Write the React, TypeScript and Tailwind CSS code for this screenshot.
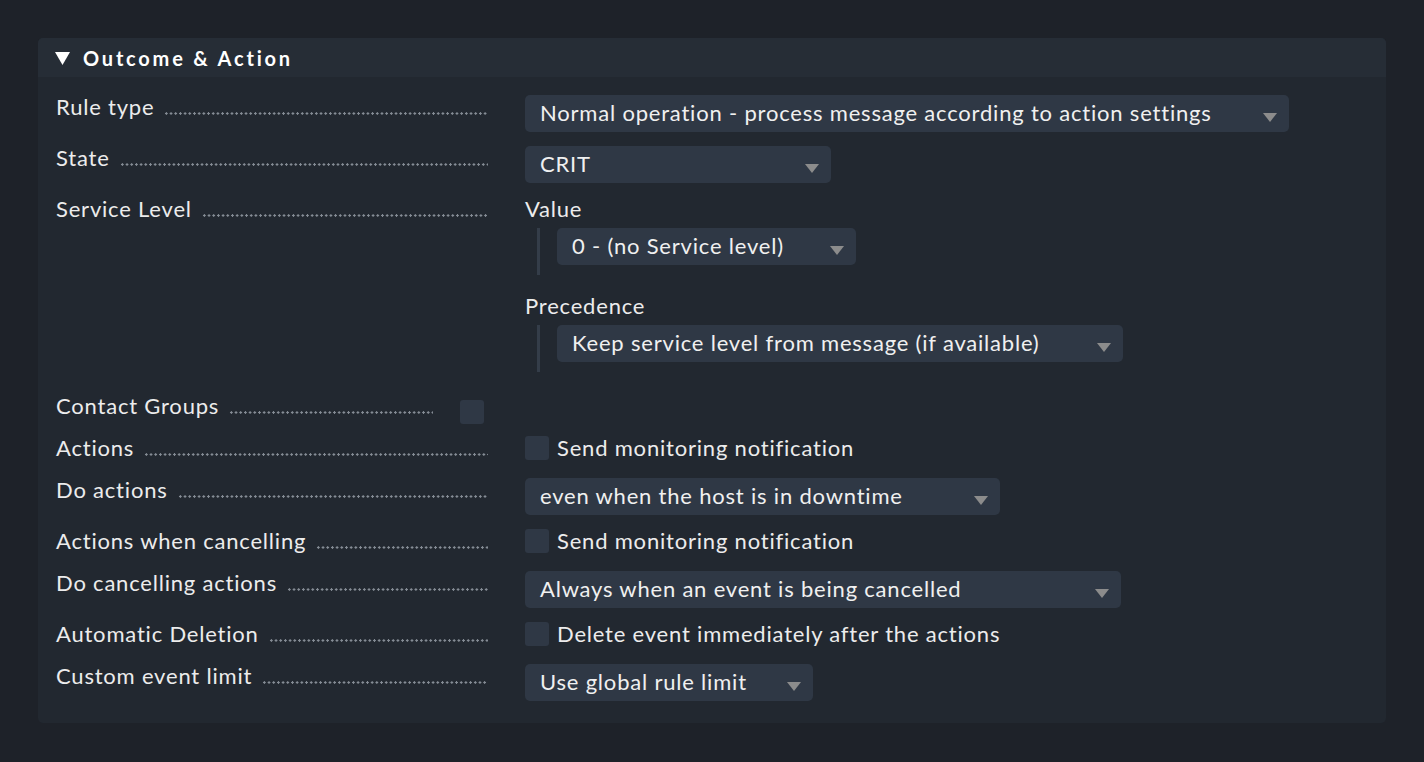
import React from "react";

const Arrow = () => (
  <svg width="14" height="9" viewBox="0 0 14 9" className="absolute right-[12px] top-[18px]">
    <polygon points="0,0 14,0 7,9" fill="#8c8c8c" />
  </svg>
);

const Select = ({ text, w }: { text: string; w: string }) => (
  <div className={`relative h-[37px] rounded-[5px] bg-[#2f3845] pl-[15px] leading-[35px] text-[#f0f0f0] ${w}`}>
    <span>{text}</span>
    <Arrow />
  </div>
);

const Check = () => <div className="h-[24px] w-[24px] shrink-0 rounded-[3px] bg-[#2f3845]" />;

const Dots = () => (
  <div className="mb-[4px] ml-[10px] h-[3px] flex-1 bg-[radial-gradient(circle,#858c95_1px,transparent_1.4px)] bg-[length:4.7px_3px] bg-repeat-x" />
);

const Label = ({ text }: { text: string }) => (
  <div className="flex w-[469px] shrink-0 items-start pr-[37px]">
    <div className="flex h-[24px] flex-1 items-end">
      <span className="whitespace-nowrap leading-[24px]">{text}</span>
      <Dots />
    </div>
  </div>
);

export default function App() {
  return (
    <div
      className="min-h-[762px] w-full bg-[#1e2229] px-[38px] pt-[38px] text-[22px] tracking-[0.8px] text-[#ececec]"
      style={{ fontFamily: "Lato, 'Noto Sans', sans-serif" }}
    >
      <div className="overflow-hidden rounded-[5px] bg-[#222830]">
        <div className="flex h-[39px] items-center bg-[#262d36] pl-[17px]">
          <svg width="15" height="13" viewBox="0 0 15 13" className="mt-[2px]">
            <polygon points="0,0 15,0 7.5,13" fill="#ffffff" />
          </svg>
          <span className="ml-[13px] text-[20px] font-bold tracking-[2.8px] text-white">Outcome &amp; Action</span>
        </div>
        <div className="flex flex-col pb-[22px] pl-[18px] pt-[18px]">
          <div className="flex h-[51px]">
            <Label text="Rule type" />
            <Select text="Normal operation - process message according to action settings" w="w-[764px]" />
          </div>
          <div className="flex h-[51px]">
            <Label text="State" />
            <Select text="CRIT" w="w-[306px]" />
          </div>
          <div className="flex h-[197px]">
            <Label text="Service Level" />
            <div className="flex flex-col">
              <div className="leading-[24px]">Value</div>
              <div className="ml-[12px] mt-[7px] h-[47px] border-l-[3px] border-[#343d49] pl-[17px]">
                <Select text="0 - (no Service level)" w="w-[299px]" />
              </div>
              <div className="mt-[19px] leading-[24px]">Precedence</div>
              <div className="ml-[12px] mt-[7px] h-[47px] border-l-[3px] border-[#343d49] pl-[17px]">
                <Select text="Keep service level from message (if available)" w="w-[566px]" />
              </div>
            </div>
          </div>
          <div className="flex h-[42px]">
            <div className="flex w-[469px] shrink-0 items-start">
              <div className="flex h-[24px] w-[377px] items-end">
                <span className="whitespace-nowrap leading-[24px]">Contact Groups</span>
                <Dots />
              </div>
              <div className="ml-[27px] mt-[6px]">
                <Check />
              </div>
            </div>
          </div>
          <div className="flex h-[42px]">
            <Label text="Actions" />
            <div className="flex h-[24px] items-center gap-[8px]">
              <Check />
              <span className="leading-[24px]">Send monitoring notification</span>
            </div>
          </div>
          <div className="flex h-[51px]">
            <Label text="Do actions" />
            <Select text="even when the host is in downtime" w="w-[475px]" />
          </div>
          <div className="flex h-[42px]">
            <Label text="Actions when cancelling" />
            <div className="flex h-[24px] items-center gap-[8px]">
              <Check />
              <span className="leading-[24px]">Send monitoring notification</span>
            </div>
          </div>
          <div className="flex h-[51px]">
            <Label text="Do cancelling actions" />
            <Select text="Always when an event is being cancelled" w="w-[596px]" />
          </div>
          <div className="flex h-[42px]">
            <Label text="Automatic Deletion" />
            <div className="flex h-[24px] items-center gap-[8px]">
              <Check />
              <span className="leading-[24px]">Delete event immediately after the actions</span>
            </div>
          </div>
          <div className="flex h-[37px]">
            <Label text="Custom event limit" />
            <Select text="Use global rule limit" w="w-[288px]" />
          </div>
        </div>
      </div>
    </div>
  );
}
